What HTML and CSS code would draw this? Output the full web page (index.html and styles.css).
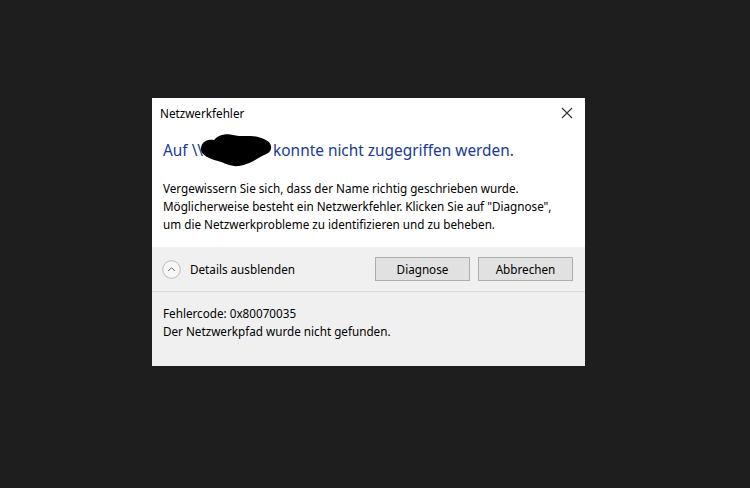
FILE: index.html
```html
<!DOCTYPE html>
<html lang="de">
<head>
<meta charset="utf-8">
<title>Netzwerkfehler</title>
<link rel="stylesheet" href="styles.css">
</head>
<body>
<div class="dialog">
  <div class="titlebar">
    <span class="title">Netzwerkfehler</span>
    <svg class="close" width="12" height="12" viewBox="0 0 12 12"><path d="M1 1 L11 11 M11 1 L1 11" stroke="#333" stroke-width="1.1" fill="none"/></svg>
  </div>
  <div class="main">
    <h1 class="heading">Auf \\<span class="redact"><svg class="blob" width="72" height="34" viewBox="0 0 72 34"><path d="M1,15 C2,8 8,6 14,7 C18,2 26,0 33,2 C40,4 50,2 58,4 C65,6 70,8 71,13 C72,19 67,21 62,23 C55,27 48,32 39,33 C31,34 25,30 18,28 C10,26 0,22 1,15 Z" fill="#000"/></svg></span>konnte nicht zugegriffen werden.</h1>
    <p class="message">Vergewissern Sie sich, dass der Name richtig geschrieben wurde. Möglicherweise besteht ein Netzwerkfehler. Klicken Sie auf "Diagnose", um die Netzwerkprobleme zu identifizieren und zu beheben.</p>
  </div>
  <div class="footer">
    <div class="toggle">
      <svg class="chevron" width="19" height="19" viewBox="0 0 19 19"><circle cx="9.5" cy="9.5" r="8.8" fill="#f7f7f7" stroke="#b4b4b4" stroke-width="0.9"/><path d="M6.2 11 L9.5 7.7 L12.8 11" stroke="#666" stroke-width="1" fill="none"/></svg>
      <span>Details ausblenden</span>
    </div>
    <div class="buttons">
      <button class="btn">Diagnose</button>
      <button class="btn">Abbrechen</button>
    </div>
  </div>
  <div class="details">
    <p>Fehlercode: 0x80070035</p>
    <p>Der Netzwerkpfad wurde nicht gefunden.</p>
  </div>
</div>
</body>
</html>
```

FILE: styles.css
```css
html, body {
  margin: 0;
  height: 100%;
}
body {
  background: #1e1e1e;
  padding: 98px 0 0 152px;
  box-sizing: border-box;
  font-family: "Noto Sans", "Open Sans", sans-serif;
  font-size: 11.7px;
  color: #000;
}
.dialog {
  width: 433px;
  height: 268px;
  background: #fff;
  display: flex;
  flex-direction: column;
}
.titlebar {
  height: 30px;
  display: flex;
  align-items: center;
  justify-content: space-between;
  padding: 0 12px 0 8px;
}
.title {
  font-size: 11.7px;
  color: #000;
}
.close {
  display: block;
}
.main {
  padding: 0 11px;
  height: 119px;
}
.heading {
  margin: 10px 0 0 0;
  font-weight: normal;
  font-size: 15.4px;
  line-height: 26px;
  color: #1a3a94;
  white-space: nowrap;
}
.redact {
  display: inline-block;
  position: relative;
  width: 70px;
  height: 1px;
}
.blob {
  position: absolute;
  left: -3px;
  top: -22px;
}
.message {
  margin: 15px 0 0 0;
  line-height: 18px;
  width: 400px;
}
.footer {
  background: #f0f0f0;
  height: 44px;
  border-bottom: 1px solid #dcdcdc;
  display: flex;
  align-items: center;
  justify-content: space-between;
  padding: 0 12px 0 10px;
}
.toggle {
  display: flex;
  align-items: center;
  gap: 9px;
}
.chevron {
  display: block;
}
.buttons {
  display: flex;
  gap: 8px;
}
.btn {
  width: 95px;
  height: 24px;
  background: #e1e1e1;
  border: 1px solid #adadad;
  font-family: inherit;
  font-size: 11.7px;
  color: #000;
  padding: 0;
}
.details {
  flex: 1;
  background: #f0f0f0;
  padding: 12px 11px 0 11px;
}
.details p {
  margin: 0;
  line-height: 18px;
}
```
